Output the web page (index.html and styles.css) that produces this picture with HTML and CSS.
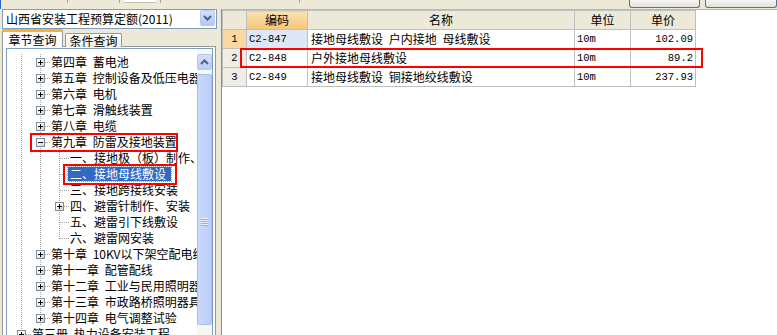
FILE: index.html
```html
<!DOCTYPE html>
<html lang="zh-CN">
<head>
    <meta charset="UTF-8" />
    <title>定额查询</title>
    <link rel="stylesheet" href="styles.css">
</head>
<body>
    <div class="screen">
        <div class="topbar">
            <span class="edge"></span>
            <span class="tick t1"></span>
            <span class="tick t2"></span>
            <span class="flap"></span>
            <span class="tick t3"></span>
            <span class="tick t4"></span>
            <span class="tbtn b1"></span>
            <span class="tbtn b2"></span>
        </div>

        <div class="main">
            <div class="left">
                <div class="combo">
                    <span class="combo-text">山西省安装工程预算定额(2011)</span>
                    <span class="combo-btn">
                        <svg width="9" height="6" viewBox="0 0 9 6"><path d="M1 1l3.5 3.5L8 1" fill="none" stroke="#4D6185" stroke-width="2"/></svg>
                    </span>
                </div>
                <div class="tabs">
                    <span class="tab active">章节查询</span>
                    <span class="tab">条件查询</span>
                </div>
                <div class="tab-page">
                    <div class="tree">
                        <div class="tree-body">
                            <div class="row ch"><span class="pm plus"></span><span class="label">第四章 蓄电池</span></div>
                            <div class="row ch"><span class="pm plus"></span><span class="label">第五章 控制设备及低压电器</span></div>
                            <div class="row ch"><span class="pm plus"></span><span class="label">第六章 电机</span></div>
                            <div class="row ch"><span class="pm plus"></span><span class="label">第七章 滑触线装置</span></div>
                            <div class="row ch"><span class="pm plus"></span><span class="label">第八章 电缆</span></div>
                            <div class="row ch open"><span class="pm"></span><span class="label">第九章 防雷及接地装置</span></div>
                            <div class="row sub"><span class="label">一、接地极（板）制作、安装</span></div>
                            <div class="row sub"><span class="label selected">二、接地母线敷设</span></div>
                            <div class="row sub"><span class="label">三、接地跨接线安装</span></div>
                            <div class="row sub has-box"><span class="pm plus"></span><span class="label">四、避雷针制作、安装</span></div>
                            <div class="row sub"><span class="label">五、避雷引下线敷设</span></div>
                            <div class="row sub last"><span class="label">六、避雷网安装</span></div>
                            <div class="row ch"><span class="pm plus"></span><span class="label">第十章 10KV以下架空配电线路</span></div>
                            <div class="row ch"><span class="pm plus"></span><span class="label">第十一章 配管配线</span></div>
                            <div class="row ch"><span class="pm plus"></span><span class="label">第十二章 工业与民用照明器具</span></div>
                            <div class="row ch"><span class="pm plus"></span><span class="label">第十三章 市政路桥照明器具</span></div>
                            <div class="row ch"><span class="pm plus"></span><span class="label">第十四章 电气调整试验</span></div>
                            <div class="row root"><span class="pm plus"></span><span class="label">第三册 热力设备安装工程</span></div>
                        </div>
                        <div class="vscroll">
                            <span class="sb-up">
                                <svg width="9" height="6" viewBox="0 0 9 6"><path d="M1 5l3.5-3.5L8 5" fill="none" stroke="#4D6185" stroke-width="2"/></svg>
                            </span>
                            <span class="sb-thumb"><span class="grip"></span></span>
                        </div>
                    </div>
                </div>
            </div>

            <div class="splitter"></div>

            <div class="grid-wrap">
                <table class="grid">
                    <colgroup>
                        <col class="c-no"><col class="c-code"><col class="c-name"><col class="c-unit"><col class="c-price">
                    </colgroup>
                    <thead>
                        <tr><th></th><th class="sorted">编码</th><th>名称</th><th>单位</th><th>单价</th></tr>
                    </thead>
                    <tbody>
                        <tr class="cur">
                            <td class="no mono">1</td><td class="code mono">C2-847</td><td class="name">接地母线敷设 户内接地 母线敷设</td><td class="mono">10m</td><td class="mono price">102.09</td>
                        </tr>
                        <tr>
                            <td class="no mono">2</td><td class="code mono">C2-848</td><td class="name">户外接地母线敷设</td><td class="mono">10m</td><td class="mono price">89.2</td>
                        </tr>
                        <tr>
                            <td class="no mono">3</td><td class="code mono">C2-849</td><td class="name">接地母线敷设 铜接地绞线敷设</td><td class="mono">10m</td><td class="mono price">237.93</td>
                        </tr>
                    </tbody>
                </table>
            </div>
        </div>

        <div class="mark mark-ch"></div>
        <div class="mark mark-sel"></div>
        <div class="mark mark-row"></div>
    </div>
</body>
</html>
```

FILE: styles.css
```css
body {
    margin: 0;
    background: #ECE9D8;
    font: 12px/16px "Noto Sans CJK SC", "Liberation Sans", sans-serif;
    color: #000;
    overflow: hidden;
}

.screen {
    position: relative;
    width: 777px;
    height: 335px;
    overflow: hidden;
}

/* strip of the toolbar above */
.topbar {
    display: flex;
    align-items: flex-start;
    height: 9px;
    overflow: hidden;
}

.edge {
    width: 2px;
    height: 9px;
    background: #2E63C6;
}

.tick {
    width: 1px;
    height: 3px;
    background: #A7A69A;
}

.t1 { margin-left: 66px; }
.t2 { margin-left: 51px; }
.t3 { margin-left: 4px; }
.t4 { margin-left: 139px; }

.flap {
    margin-left: 4px;
    width: 43px;
    height: 2px;
    background: #fff;
    border-bottom: 1px solid #C5C2B2;
}

.tbtn {
    flex-shrink: 0;
    height: 7px;
    border: 1px solid #5F7086;
    border-top: 0;
    border-radius: 0 0 3px 3px;
    background: linear-gradient(#F6F6F2, #E2E1D9);
}

.b1 { margin-left: 329px; width: 69px; }
.b2 { margin-left: 5px; width: 70px; }

.main {
    display: flex;
    height: 326px;
}

/* left side */
.left {
    width: 218px;
    flex-shrink: 0;
    display: flex;
    flex-direction: column;
    min-width: 0;
}

.combo {
    margin-left: 2px;
    width: 215px;
    height: 20px;
    box-sizing: border-box;
    border: 1px solid #7F9DB9;
    background: #fff;
    display: flex;
    align-items: flex-start;
}

.combo-text {
    flex: 1;
    padding-left: 3px;
    line-height: 17px;
    white-space: nowrap;
}

.combo-btn {
    width: 15px;
    height: 16px;
    margin-right: 1px;
    box-sizing: border-box;
    border: 1px solid #B5C8F3;
    border-radius: 2px;
    background: linear-gradient(#D4E0FD, #B3C7F5);
    display: flex;
    align-items: center;
    justify-content: center;
}

.tabs {
    display: flex;
    align-items: flex-end;
    height: 18px;
    padding-left: 2px;
    position: relative;
    z-index: 1;
    margin-bottom: -1px;
}

.tab {
    box-sizing: border-box;
    height: 14px;
    width: 57px;
    margin-left: 2px;
    border: 1px solid #919B9C;
    border-bottom: 0;
    border-radius: 2px 2px 0 0;
    background: linear-gradient(#FFFFFF, #ECEBE6);
    text-align: center;
    line-height: 14px;
}

.tab.active {
    margin-left: 0;
    width: 61px;
    height: 18px;
    border-top: 3px solid #F4B333;
    background: #FCFCFE;
    line-height: 15px;
}

.tab-page {
    flex: 1;
    min-height: 0;
    margin-left: 2px;
    width: 214px;
    box-sizing: border-box;
    border: 1px solid #919B9C;
    border-bottom: 0;
    background: #FCFCFE;
    padding: 1px 2px 0 3px;
    display: flex;
    overflow: hidden;
}

.tree {
    flex: 1;
    min-width: 0;
    display: flex;
    border: 1px solid #7F9DB9;
    border-bottom: 0;
    background: #fff;
    overflow: hidden;
}

.tree-body {
    --v: repeating-linear-gradient(to bottom, #A0A0A0 0 1px, transparent 1px 2px);
    --h: repeating-linear-gradient(to right, #A0A0A0 0 1px, transparent 1px 2px);
    flex: 1;
    min-width: 0;
    overflow: hidden;
    padding-top: 5px;
}

.row {
    display: flex;
    align-items: center;
    height: 16px;
    white-space: nowrap;
    word-spacing: 3px;
    background-repeat: no-repeat;
}

.row.ch {
    padding-left: 29px;
    background-image: var(--v), var(--v), var(--h);
    background-position: 14px 0, 33px 0, 38px 8px;
    background-size: 1px 100%, 1px 100%, 6px 1px;
}

.row.ch.open {
    background-image: var(--v), var(--v), var(--h), var(--v);
    background-position: 14px 0, 33px 0, 38px 8px, 52px 12px;
    background-size: 1px 100%, 1px 100%, 6px 1px, 1px 4px;
}

.row.sub {
    padding-left: 63px;
    background-image: var(--v), var(--v), var(--v), var(--h);
    background-position: 14px 0, 33px 0, 52px 0, 53px 8px;
    background-size: 1px 100%, 1px 100%, 1px 100%, 9px 1px;
}

.row.sub.last {
    background-size: 1px 100%, 1px 100%, 1px 9px, 9px 1px;
}

.row.sub.has-box {
    padding-left: 48px;
}

.row.root {
    padding-left: 10px;
    background-image: var(--v), var(--h);
    background-position: 14px 0, 19px 8px;
    background-size: 1px 8px, 6px 1px;
}

.pm {
    position: relative;
    flex-shrink: 0;
    width: 9px;
    height: 9px;
    box-sizing: border-box;
    margin-right: 6px;
    border: 1px solid #7B8E9E;
    background: linear-gradient(135deg, #FFFFFF 30%, #D2CFC0);
}

.pm::before {
    content: "";
    position: absolute;
    left: 1px;
    top: 3px;
    width: 5px;
    height: 1px;
    background: #000;
}

.pm.plus::after {
    content: "";
    position: absolute;
    left: 3px;
    top: 1px;
    width: 1px;
    height: 5px;
    background: #000;
}

.label {
    line-height: 14px;
}

.label.selected {
    margin-left: -2px;
    padding: 0 5px 0 2px;
    background: #316AC5;
    color: #fff;
    outline: 1px dotted #C9A53A;
}

.vscroll {
    width: 15px;
    flex-shrink: 0;
    padding-top: 5px;
    background: #F7F6F1;
    display: flex;
    flex-direction: column;
    align-items: center;
}

.sb-up {
    flex-shrink: 0;
    width: 15px;
    height: 16px;
    box-sizing: border-box;
    border: 1px solid #B5C8F3;
    border-radius: 2px;
    background: linear-gradient(#D4E0FD, #B9CCF8);
    display: flex;
    align-items: center;
    justify-content: center;
}

.sb-thumb {
    flex-shrink: 0;
    margin-top: 4px;
    width: 15px;
    height: 251px;
    box-sizing: border-box;
    border: 1px solid #A9BEEF;
    border-radius: 2px;
    background: linear-gradient(to right, #C9D8FC, #BBCEFA);
    display: flex;
    justify-content: center;
    padding-top: 143px;
}

.grip {
    width: 7px;
    height: 8px;
    background: repeating-linear-gradient(to bottom, #EEF4FE 0 1px, #8CAEF3 1px 2px);
}

.splitter {
    width: 3px;
    flex-shrink: 0;
}

/* result grid */
.grid-wrap {
    flex: 1;
    background: #fff;
    border-left: 1px solid #8E8C80;
    border-top: 1px solid #B9B6A6;
}

.grid {
    border-collapse: collapse;
    table-layout: fixed;
    width: 474px;
}

.c-no { width: 24px; }
.c-code { width: 61px; }
.c-name { width: 267px; }
.c-unit { width: 56px; }
.c-price { width: 65px; }

.grid th,
.grid td {
    border: 1px solid #C0C0C0;
    height: 18px;
    padding: 0 2px;
    white-space: nowrap;
    overflow: hidden;
}

.grid th {
    font-weight: normal;
    background: #ECE9D8;
    text-align: center;
}

.grid th.sorted {
    background: linear-gradient(#FBE2AE, #F6C67A);
}

.mono {
    font-family: "Liberation Mono", monospace;
    font-size: 10.5px;
}

.grid td.no {
    background: #F0EDE2;
    text-align: center;
    padding: 0;
}

.grid tr.cur td.no {
    background: #FAD8A2;
}

.grid tr.cur td.code {
    background: #DDE7F5;
}

.grid td.name {
    padding-left: 3px;
    word-spacing: 3px;
}

.grid td.price {
    text-align: right;
}

/* red annotation frames */
.mark {
    position: absolute;
    box-sizing: border-box;
    border: 2px solid #FF0000;
}

.mark-ch {
    left: 30px;
    top: 133px;
    width: 148px;
    height: 19px;
}

.mark-sel {
    left: 63px;
    top: 164px;
    width: 114px;
    height: 21px;
}

.mark-row {
    left: 240px;
    top: 48px;
    width: 463px;
    height: 20px;
}
```
